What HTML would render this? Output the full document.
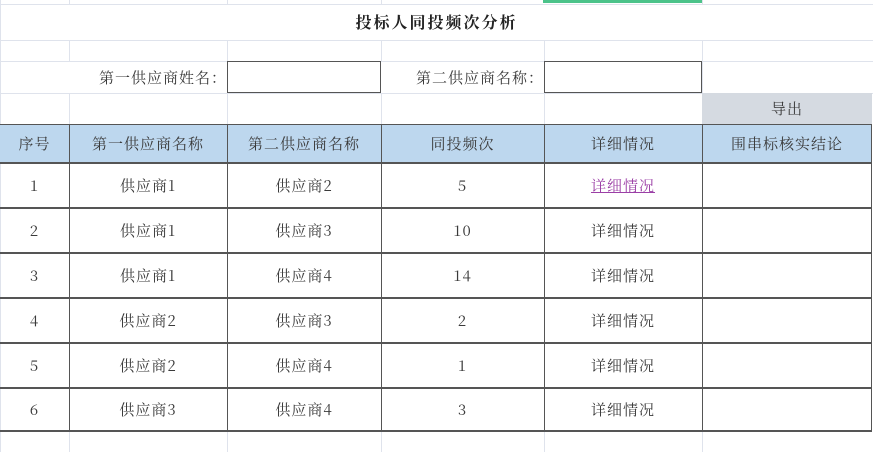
<!DOCTYPE html>
<html><head><meta charset="utf-8"><style>
body{margin:0;width:873px;height:452px;overflow:hidden;background:#fff;font-family:"Noto Serif CJK SC","Liberation Serif",serif;color:#3a3a3a;position:relative}
.g{position:absolute;background:#dfe3ec}
.b{position:absolute;background:#555}
.t{position:absolute;display:flex;align-items:center;justify-content:center;font-size:15px;line-height:1;letter-spacing:1px;white-space:nowrap}
</style></head><body>
<div class="g" style="left:0;top:4px;width:873px;height:1px"></div>
<div class="g" style="left:0;top:40px;width:873px;height:1px"></div>
<div class="g" style="left:0;top:61px;width:873px;height:1px"></div>
<div class="g" style="left:0;top:93px;width:873px;height:1px"></div>
<div class="g" style="left:69px;top:0;width:1px;height:4px"></div>
<div class="g" style="left:227px;top:0;width:1px;height:4px"></div>
<div class="g" style="left:381px;top:0;width:1px;height:4px"></div>
<div class="g" style="left:702px;top:0;width:1px;height:4px"></div>
<div class="g" style="left:69px;top:40px;width:1px;height:21px"></div>
<div class="g" style="left:227px;top:40px;width:1px;height:21px"></div>
<div class="g" style="left:381px;top:40px;width:1px;height:21px"></div>
<div class="g" style="left:544px;top:40px;width:1px;height:21px"></div>
<div class="g" style="left:702px;top:40px;width:1px;height:84px"></div>
<div class="g" style="left:69px;top:93px;width:1px;height:31px"></div>
<div class="g" style="left:227px;top:93px;width:1px;height:31px"></div>
<div class="g" style="left:381px;top:93px;width:1px;height:31px"></div>
<div class="g" style="left:544px;top:93px;width:1px;height:31px"></div>
<div class="g" style="left:0;top:0;width:1px;height:452px"></div>
<div class="g" style="left:69px;top:431px;width:1px;height:21px"></div>
<div class="g" style="left:227px;top:431px;width:1px;height:21px"></div>
<div class="g" style="left:381px;top:431px;width:1px;height:21px"></div>
<div class="g" style="left:544px;top:431px;width:1px;height:21px"></div>
<div class="g" style="left:702px;top:431px;width:1px;height:21px"></div>
<div style="position:absolute;left:543px;top:0;width:159px;height:3px;background:#4cc38a"></div>
<div class="t" style="left:0;top:4px;width:873px;height:36px;font-weight:bold;font-size:16px;letter-spacing:2px;color:#222">投标人同投频次分析</div>
<div class="t" style="left:69px;top:61px;width:158px;height:32px;justify-content:flex-end;padding-right:0;box-sizing:border-box">第一供应商姓名：</div>
<div style="position:absolute;left:227px;top:61px;width:152px;height:30px;border:1px solid #555"></div>
<div class="t" style="left:381px;top:61px;width:163px;height:32px;justify-content:flex-end;padding-right:0;box-sizing:border-box">第二供应商名称：</div>
<div style="position:absolute;left:544px;top:61px;width:156px;height:30px;border:1px solid #555"></div>
<div class="t" style="left:702px;top:93px;width:170px;height:31px;background:#d5dae1">导出</div>
<div style="position:absolute;left:0;top:124px;width:872px;height:39px;background:#bdd7ee"></div>
<div class="t" style="left:0;top:124px;width:69px;height:39px">序号</div>
<div class="t" style="left:69px;top:124px;width:158px;height:39px">第一供应商名称</div>
<div class="t" style="left:227px;top:124px;width:154px;height:39px">第二供应商名称</div>
<div class="t" style="left:381px;top:124px;width:163px;height:39px">同投频次</div>
<div class="t" style="left:544px;top:124px;width:158px;height:39px">详细情况</div>
<div class="t" style="left:702px;top:124px;width:170px;height:39px">围串标核实结论</div>
<div class="b" style="left:0;top:124px;width:872px;height:1px"></div>
<div class="b" style="left:0;top:162px;width:872px;height:2px"></div>
<div class="b" style="left:0;top:207px;width:872px;height:2px"></div>
<div class="b" style="left:0;top:252px;width:872px;height:2px"></div>
<div class="b" style="left:0;top:297px;width:872px;height:2px"></div>
<div class="b" style="left:0;top:342px;width:872px;height:2px"></div>
<div class="b" style="left:0;top:387px;width:872px;height:2px"></div>
<div class="b" style="left:0;top:430px;width:872px;height:2px"></div>
<div class="b" style="left:69px;top:124px;width:1px;height:307px"></div>
<div class="b" style="left:227px;top:124px;width:1px;height:307px"></div>
<div class="b" style="left:381px;top:124px;width:1px;height:307px"></div>
<div class="b" style="left:544px;top:124px;width:1px;height:307px"></div>
<div class="b" style="left:702px;top:124px;width:1px;height:307px"></div>
<div class="b" style="left:871px;top:124px;width:1px;height:307px"></div>
<div class="t" style="left:0;top:163px;width:69px;height:44px">1</div><div class="t" style="left:69px;top:163px;width:158px;height:44px">供应商1</div><div class="t" style="left:227px;top:163px;width:154px;height:44px">供应商2</div><div class="t" style="left:381px;top:163px;width:163px;height:44px">5</div><div class="t" style="left:544px;top:163px;width:158px;height:44px;color:#9b3fa6;text-decoration:underline">详细情况</div>
<div class="t" style="left:0;top:208px;width:69px;height:45px">2</div><div class="t" style="left:69px;top:208px;width:158px;height:45px">供应商1</div><div class="t" style="left:227px;top:208px;width:154px;height:45px">供应商3</div><div class="t" style="left:381px;top:208px;width:163px;height:45px">10</div><div class="t" style="left:544px;top:208px;width:158px;height:45px">详细情况</div>
<div class="t" style="left:0;top:253px;width:69px;height:45px">3</div><div class="t" style="left:69px;top:253px;width:158px;height:45px">供应商1</div><div class="t" style="left:227px;top:253px;width:154px;height:45px">供应商4</div><div class="t" style="left:381px;top:253px;width:163px;height:45px">14</div><div class="t" style="left:544px;top:253px;width:158px;height:45px">详细情况</div>
<div class="t" style="left:0;top:298px;width:69px;height:45px">4</div><div class="t" style="left:69px;top:298px;width:158px;height:45px">供应商2</div><div class="t" style="left:227px;top:298px;width:154px;height:45px">供应商3</div><div class="t" style="left:381px;top:298px;width:163px;height:45px">2</div><div class="t" style="left:544px;top:298px;width:158px;height:45px">详细情况</div>
<div class="t" style="left:0;top:343px;width:69px;height:45px">5</div><div class="t" style="left:69px;top:343px;width:158px;height:45px">供应商2</div><div class="t" style="left:227px;top:343px;width:154px;height:45px">供应商4</div><div class="t" style="left:381px;top:343px;width:163px;height:45px">1</div><div class="t" style="left:544px;top:343px;width:158px;height:45px">详细情况</div>
<div class="t" style="left:0;top:388px;width:69px;height:43px">6</div><div class="t" style="left:69px;top:388px;width:158px;height:43px">供应商3</div><div class="t" style="left:227px;top:388px;width:154px;height:43px">供应商4</div><div class="t" style="left:381px;top:388px;width:163px;height:43px">3</div><div class="t" style="left:544px;top:388px;width:158px;height:43px">详细情况</div>
</body></html>
